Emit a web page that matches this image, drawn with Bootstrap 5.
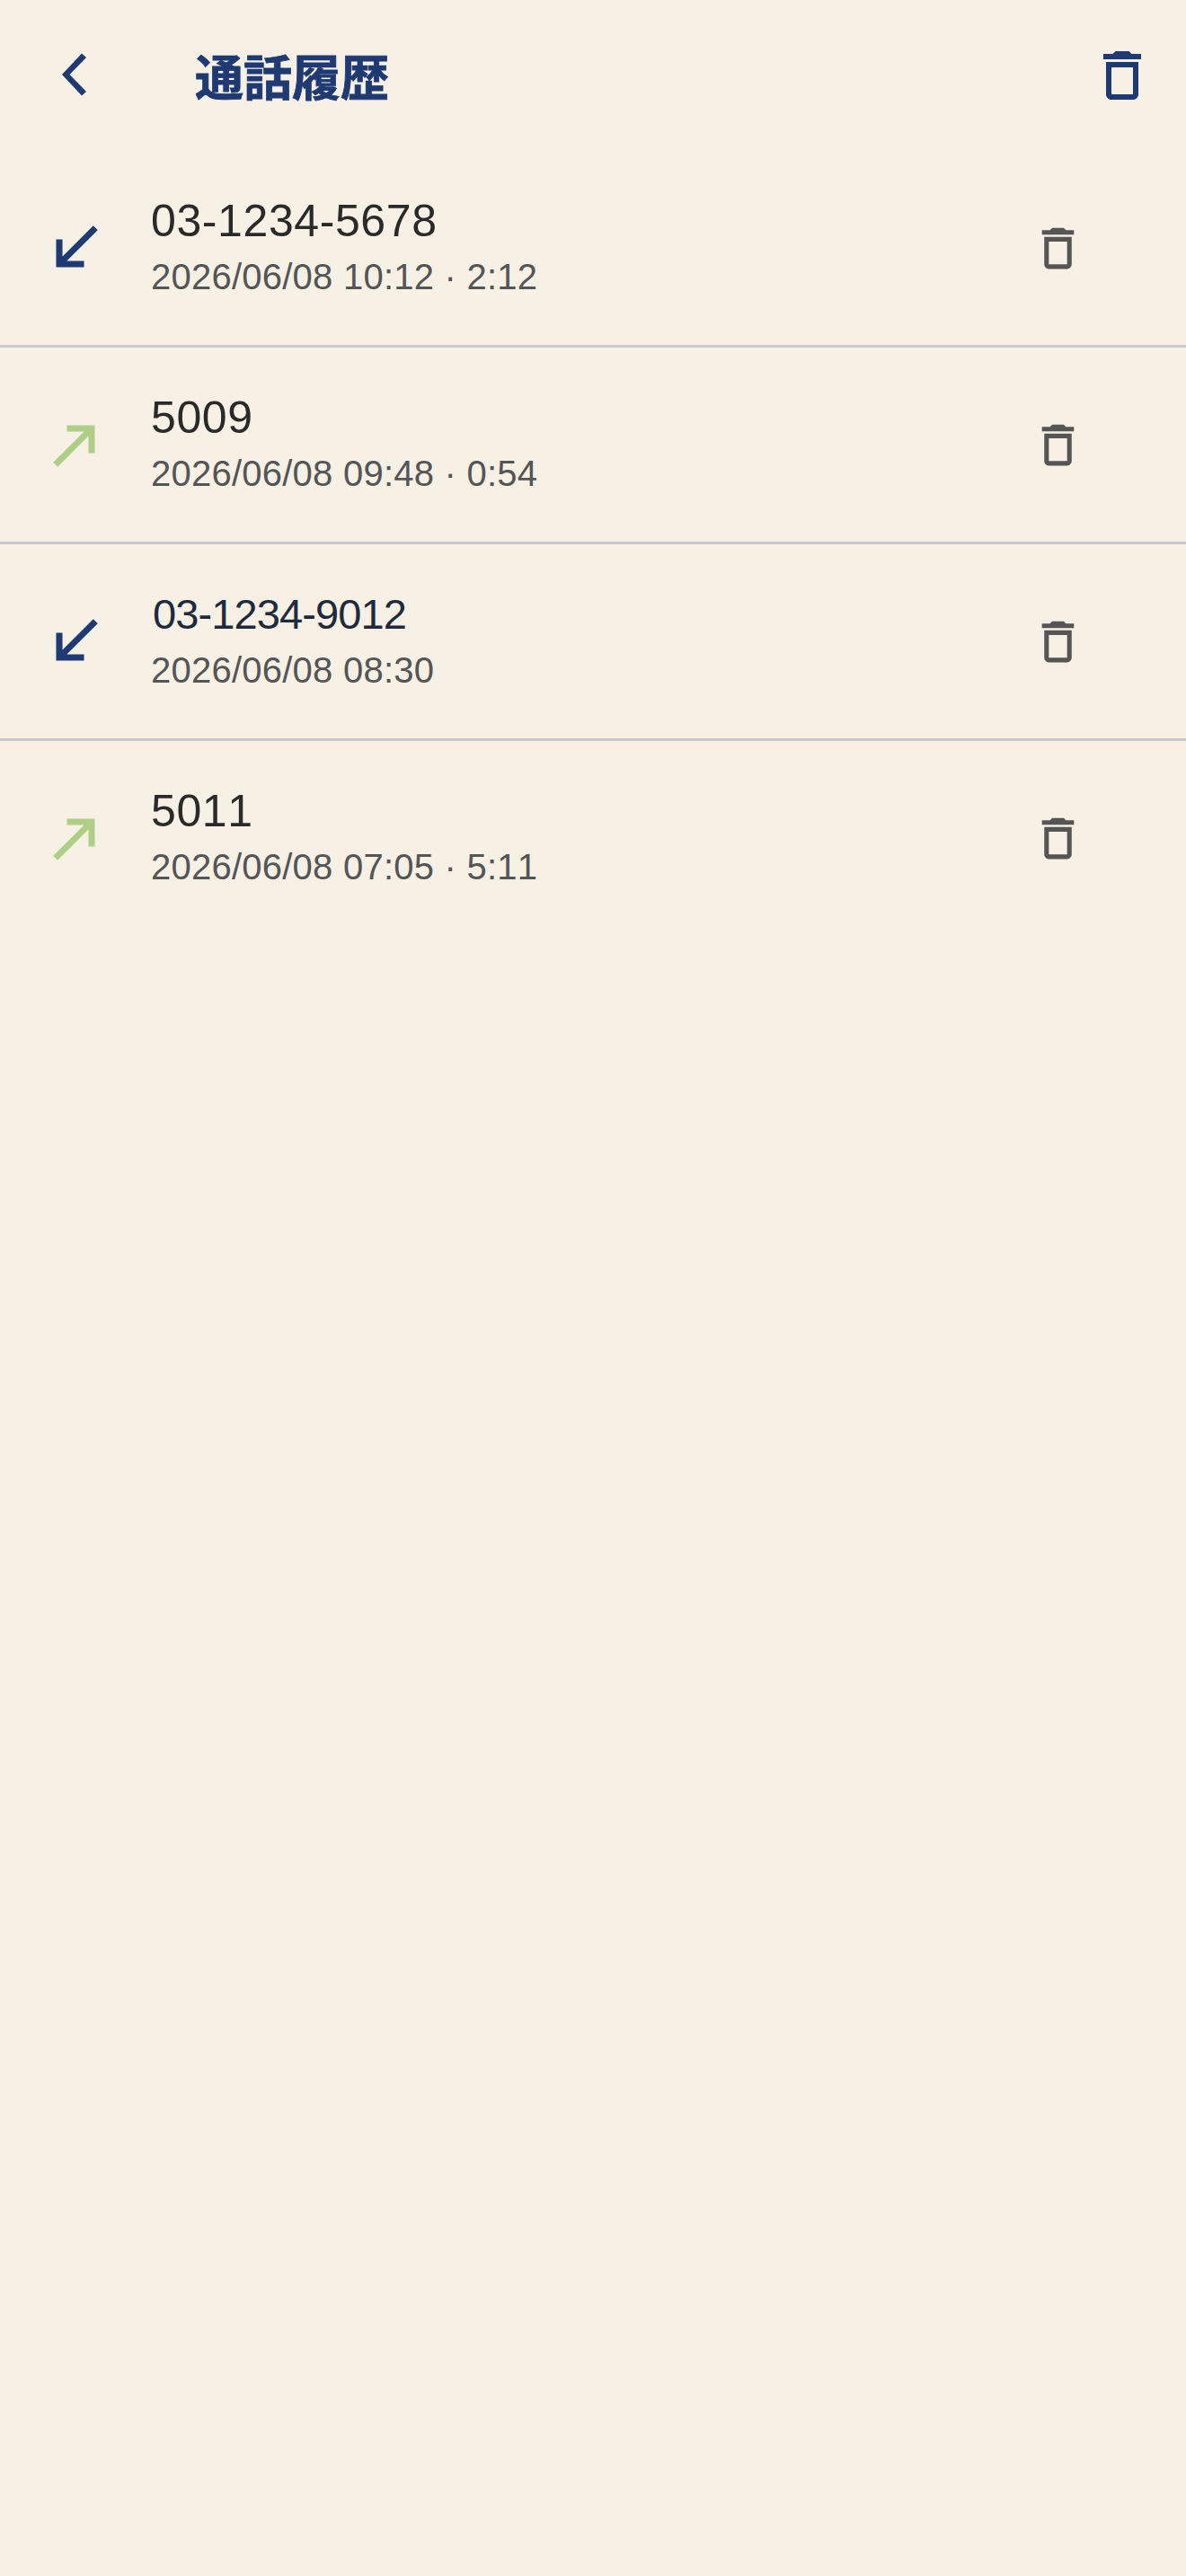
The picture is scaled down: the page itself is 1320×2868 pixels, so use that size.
<!DOCTYPE html>
<html lang="ja">
<head>
<meta charset="utf-8">
<title>通話履歴</title>
<link rel="stylesheet" href="https://cdn.jsdelivr.net/npm/bootstrap@5.3.0/dist/css/bootstrap.min.css">
<style>
html, body { background: #F6F0E5; min-height: 100%; }
body { font-family: "Liberation Sans", "Noto Sans CJK JP", sans-serif; min-height: 2868px; font-kerning: none; }
.app-head { height: 168px; padding: 0 35px 0 60px; }
.head-back { width: 48px; height: 72px; color: #1F3A73; }
.head-title { font-family: "Liberation Sans", "Noto Sans CJK JP", sans-serif; font-weight: 700; font-size: 54px; line-height: 72px; color: #1F3A73; margin: 8px 0 0 109px; -webkit-text-stroke: 0.8px #1F3A73; }
.head-trash { color: #1F3A73; width: 72px; height: 72px; }
.call-row { height: 219px; padding: 0 112px 0 48px; border-bottom: 3px solid #C8C8D0; }
.call-row:last-child { border-bottom-color: transparent; }
.call-dir { width: 72px; height: 72px; flex: none; margin-right: 48px; }
.dir-in { color: #1F3A73; }
.dir-out { color: #AECF85; }
.call-text { padding-bottom: 4px; }
.call-num { font-size: 50px; line-height: 60px; letter-spacing: .6px; color: #2A2A2A; }
.call-num-alt { font-size: 47px; letter-spacing: -.9px; color: #1F2A3C; padding-left: 2px; }
.call-meta { font-size: 40px; line-height: 48px; letter-spacing: .24px; color: #555555; margin-top: 8px; }
.row-trash { width: 61px; height: 61px; color: #555555; flex: none; }
.icon-btn { background: none; border: 0; padding: 0; line-height: 0; }
svg { display: block; width: 100%; height: 100%; fill: currentColor; }
.call-dir svg { stroke: currentColor; stroke-width: .35; }
</style>
</head>
<body>
<header class="app-head d-flex align-items-center">
  <button class="icon-btn head-back" aria-label="戻る"><svg viewBox="0 0 48 72"><path d="M31 11.500 36 16 17.500 35 36 54 31 58.500 9 35z"/></svg></button>
  <h1 class="head-title mb-0 flex-grow-1">通話履歴</h1>
  <button class="icon-btn head-trash" aria-label="削除"><svg viewBox="0 0 24 24"><path d="M6 19c0 1.100.9 2 2 2h8c1.100 0 2-.9 2-2V7H6v12zM8 9h8v10H8V9zm7.500-5l-1-1h-5l-1 1H5v2h14V4z"/></svg></button>
</header>
<main class="list-group list-group-flush">
  <div class="call-row d-flex align-items-center">
    <div class="call-dir dir-in"><svg viewBox="0 0 24 24"><path d="M20 5.410L18.590 4 7 15.590V9H5v10h10v-2H8.410z"/></svg></div>
    <div class="call-text flex-grow-1"><div class="call-num">03-1234-5678</div><div class="call-meta">2026/06/08 10:12 · 2:12</div></div>
    <button class="icon-btn row-trash" aria-label="削除"><svg viewBox="0 0 24 24"><path d="M6 19c0 1.100.9 2 2 2h8c1.100 0 2-.9 2-2V7H6v12zM8 9h8v10H8V9zm7.500-5l-1-1h-5l-1 1H5v2h14V4z"/></svg></button>
  </div>
  <div class="call-row d-flex align-items-center">
    <div class="call-dir dir-out"><svg viewBox="0 0 24 24"><path d="M9 5v2h6.590L4 18.590 5.410 20 17 8.410V15h2V5z"/></svg></div>
    <div class="call-text flex-grow-1"><div class="call-num">5009</div><div class="call-meta">2026/06/08 09:48 · 0:54</div></div>
    <button class="icon-btn row-trash" aria-label="削除"><svg viewBox="0 0 24 24"><path d="M6 19c0 1.100.9 2 2 2h8c1.100 0 2-.9 2-2V7H6v12zM8 9h8v10H8V9zm7.500-5l-1-1h-5l-1 1H5v2h14V4z"/></svg></button>
  </div>
  <div class="call-row d-flex align-items-center">
    <div class="call-dir dir-in"><svg viewBox="0 0 24 24"><path d="M20 5.410L18.590 4 7 15.590V9H5v10h10v-2H8.410z"/></svg></div>
    <div class="call-text flex-grow-1"><div class="call-num call-num-alt">03-1234-9012</div><div class="call-meta">2026/06/08 08:30</div></div>
    <button class="icon-btn row-trash" aria-label="削除"><svg viewBox="0 0 24 24"><path d="M6 19c0 1.100.9 2 2 2h8c1.100 0 2-.9 2-2V7H6v12zM8 9h8v10H8V9zm7.500-5l-1-1h-5l-1 1H5v2h14V4z"/></svg></button>
  </div>
  <div class="call-row d-flex align-items-center">
    <div class="call-dir dir-out"><svg viewBox="0 0 24 24"><path d="M9 5v2h6.590L4 18.590 5.410 20 17 8.410V15h2V5z"/></svg></div>
    <div class="call-text flex-grow-1"><div class="call-num">5011</div><div class="call-meta">2026/06/08 07:05 · 5:11</div></div>
    <button class="icon-btn row-trash" aria-label="削除"><svg viewBox="0 0 24 24"><path d="M6 19c0 1.100.9 2 2 2h8c1.100 0 2-.9 2-2V7H6v12zM8 9h8v10H8V9zm7.500-5l-1-1h-5l-1 1H5v2h14V4z"/></svg></button>
  </div>
</main>
<script src="https://cdn.jsdelivr.net/npm/bootstrap@5.3.0/dist/js/bootstrap.bundle.min.js"></script>
</body>
</html>
